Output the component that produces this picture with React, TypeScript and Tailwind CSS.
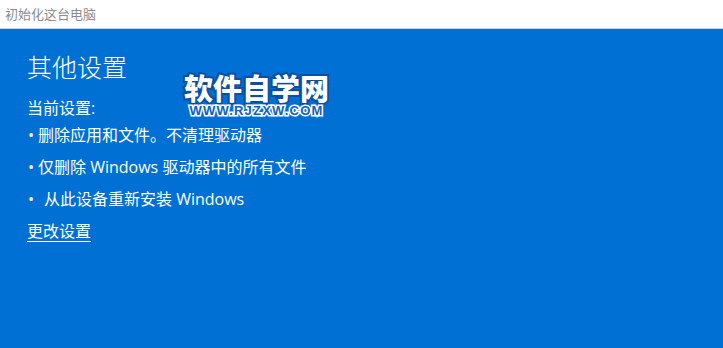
import React from "react";

const font = { fontFamily: '"Open Sans", "Noto Sans CJK SC", sans-serif' };

export default function App() {
  return (
    <div
      className="w-[723px] h-[348px] flex flex-col overflow-hidden bg-[#0070d4] relative"
      style={font}
    >
      <div className="h-[29px] shrink-0 bg-white border-b border-[#c9d3de] flex items-center pl-[5px]">
        <span className="text-[13px] text-[#8c8c8c] leading-none">初始化这台电脑</span>
      </div>
      <div className="flex-1 bg-[#0070d4] pl-[27px] pt-[21px] text-white">
        <div className="text-[25px] leading-[34px] font-light">其他设置</div>
        <div className="mt-[12px] text-[16px] leading-[24px]">当前设置:</div>
        <ul className="mt-[3px] flex flex-col gap-[8px] text-[16px] leading-[24px]">
          <li className="flex items-center">
            <span className="w-[11px] pl-[1px]">•</span>
            <span>删除应用和文件。不清理驱动器</span>
          </li>
          <li className="flex items-center">
            <span className="w-[11px] pl-[1px]">•</span>
            <span>仅删除 Windows 驱动器中的所有文件</span>
          </li>
          <li className="flex items-center">
            <span className="w-[17px] pl-[1px]">•</span>
            <span>从此设备重新安装 Windows</span>
          </li>
          <li>
            <span className="underline underline-offset-[4px] decoration-1">更改设置</span>
          </li>
        </ul>
      </div>
      <div className="absolute left-[184px] top-[70px] flex flex-col items-center">
        <div
          className="text-[29px] leading-[34px] font-black text-white [-webkit-text-stroke:4px_#0c4f9c] [paint-order:stroke_fill]"
          style={{ fontFamily: '"Noto Sans CJK SC", sans-serif' }}
        >
          软件自学网
        </div>
        <div
          className="text-[13px] leading-[14px] font-bold text-[#1060c0] tracking-[1.2px] [-webkit-text-stroke:3px_#ffffff] [paint-order:stroke_fill]"
          style={{ fontFamily: '"Liberation Sans", Arial, sans-serif' }}
        >
          WWW.RJZXW.COM
        </div>
      </div>
    </div>
  );
}
